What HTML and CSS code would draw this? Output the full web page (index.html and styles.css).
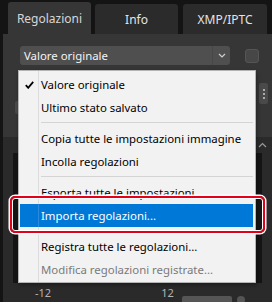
FILE: index.html
```html
<!DOCTYPE html>
<html lang="it">
  <head>
    <meta charset="UTF-8" />
    <title>Regolazioni</title>
    <link rel="stylesheet" href="styles.css">
  </head>
  <body>
    <div class="window">
      <div class="tabs">
        <div class="tab active">Regolazioni</div>
        <div class="tab">Info</div>
        <div class="tab">XMP/IPTC</div>
      </div>

      <div class="panel">
        <div class="preset-row">
          <div class="select">
            <span class="select-label">Valore originale</span>
            <span class="select-btn">
              <svg width="8" height="5" viewBox="0 0 8 5"><path d="M1 1 L4 4 L7 1" fill="none" stroke="#cfcfcf" stroke-width="1.2"/></svg>
            </span>
          </div>
          <div class="check"></div>
        </div>

        <div class="tool-row">
          <div class="handle"></div>
          <div class="side-btn">
            <span></span><span></span><span></span>
          </div>
        </div>

        <div class="section">
          <div class="section-head">
            <svg width="9" height="6" viewBox="0 0 9 6"><path d="M1 5 L4.5 1.5 L8 5" fill="none" stroke="#9a9a9a" stroke-width="1.2"/></svg>
          </div>
          <div class="section-body"></div>
          <div class="scale">
            <span class="tick-lo">-12</span>
            <span class="tick-hi">12</span>
            <span class="field"></span>
            <span class="knob"></span>
          </div>
        </div>
      </div>

      <!-- context menu over the panel -->
      <div class="menu">
        <div class="item checked">
          <svg class="tick" width="9" height="8" viewBox="0 0 9 8"><path d="M0.8 4.2 L3.2 6.8 L8.2 0.8" fill="none" stroke="#000" stroke-width="1.8"/></svg>
          Valore originale
        </div>
        <div class="item">Ultimo stato salvato</div>
        <div class="sep"></div>
        <div class="item">Copia tutte le impostazioni immagine</div>
        <div class="item">Incolla regolazioni</div>
        <div class="sep"></div>
        <div class="item">Esporta tutte le impostazioni...</div>
        <div class="item selected">Importa regolazioni...</div>
        <div class="sep"></div>
        <div class="item">Registra tutte le regolazioni...</div>
        <div class="item disabled">Modifica regolazioni registrate...</div>
      </div>

      <div class="callout"></div>
    </div>
  </body>
</html>
```

FILE: styles.css
```css
* {
  margin: 0;
  padding: 0;
  box-sizing: border-box;
}

body {
  background-color: #141414;
  font-family: "Noto Sans", "Open Sans", sans-serif;
  font-size: 11px;
}

.window {
  position: relative;
  width: 272px;
  height: 302px;
  overflow: hidden;
  display: flex;
  flex-direction: column;
}

/* Tabs */
.tabs {
  display: flex;
  align-items: flex-end;
  gap: 4px;
  height: 34px;
  padding-left: 8px;
}

.tab {
  width: 83px;
  height: 30px;
  background-color: #2b2b2b;
  border-radius: 3px 3px 0 0;
  color: #e4e4e4;
  font-size: 12px;
  display: flex;
  align-items: center;
  justify-content: center;
}

.tab:last-child {
  width: 84px;
  margin-left: 1px;
}

.tab.active {
  height: 32px;
  background-color: #363636;
  color: #d6d6d6;
}

/* Panel */
.panel {
  flex: 1;
  margin-left: 3px;
  background-color: #363636;
  display: flex;
  flex-direction: column;
}

.preset-row {
  display: flex;
  align-items: center;
  padding: 12px 0 0 17px;
  height: 31px;
}

.select {
  width: 210px;
  height: 19px;
  background-color: #4f4f4f;
  border-radius: 3px;
  display: flex;
  align-items: center;
}

.select-label {
  flex: 1;
  padding-left: 4px;
  color: #f4f4f4;
  font-size: 11.4px;
}

.select-btn {
  width: 18px;
  height: 19px;
  display: flex;
  align-items: center;
  justify-content: center;
  border-left: 1px solid #474747;
}

.check {
  width: 14px;
  height: 14px;
  margin-left: 15px;
  background-color: #474747;
  border: 1px solid #555;
  border-radius: 3px;
}

.tool-row {
  height: 72px;
  position: relative;
  display: flex;
  justify-content: space-between;
  padding-top: 18px;
}

.handle {
  width: 5px;
  height: 13px;
  margin-top: 18px;
  margin-left: 12px;
  background-color: #4a4a4a;
  border-radius: 2px;
}

.side-btn {
  width: 9px;
  height: 21px;
  margin-right: 4px;
  background-color: #4a4a4a;
  border-radius: 2px;
  display: flex;
  flex-direction: column;
  align-items: center;
  justify-content: center;
  gap: 2px;
}

.side-btn span {
  width: 2px;
  height: 2px;
  background-color: #aaa;
}

.section {
  flex: 1;
  background-color: #2a2a2a;
  display: flex;
  flex-direction: column;
}

.section-head {
  height: 16px;
  display: flex;
  justify-content: flex-end;
  align-items: center;
  padding-right: 5px;
}

.section-body {
  flex: 1;
  margin: 0 10px 0 10px;
  background-color: #151515;
}

.scale {
  height: 19px;
  display: flex;
  align-items: center;
  color: #b4b4b4;
  font-size: 11px;
  position: relative;
}

.tick-lo {
  margin-left: 32px;
}

.tick-hi {
  margin-left: 110px;
}

.field {
  width: 50px;
  height: 8px;
  margin-left: 8px;
  margin-top: 14px;
  background-color: #555;
  border-radius: 2px 2px 0 0;
}

.knob {
  width: 8px;
  height: 8px;
  margin-left: 5px;
  margin-top: 14px;
  background-color: #555;
  border-radius: 50%;
}

/* Context menu */
.menu {
  position: absolute;
  left: 18px;
  top: 70px;
  width: 238px;
  height: 213px;
  padding: 2px 2px 2px 2px;
  background-color: #f2f2f2;
  background-image: linear-gradient(to right, transparent 19px, #dcdcdc 19px, #dcdcdc 20px, transparent 20px);
  border: 1px solid #b4b4b4;
  box-shadow: 1px 2px 4px rgba(0, 0, 0, 0.35);
}

.item {
  position: relative;
  height: 23px;
  line-height: 23px;
  padding-left: 20px;
  color: #000;
  font-size: 11.4px;
  white-space: nowrap;
}

.item .tick {
  position: absolute;
  left: 4px;
  top: 8px;
}

.item.selected {
  margin-left: -1px;
  padding-left: 21px;
  background-color: #0078d7;
  background-image: linear-gradient(to right, transparent 18px, #2a8ae0 18px, #2a8ae0 19px, transparent 19px);
  color: #fff;
}

.item.disabled {
  color: #7a7a7a;
}

.sep {
  height: 8px;
  margin-left: 20px;
  background-image: linear-gradient(#d4d4d4, #d4d4d4);
  background-size: 100% 1px;
  background-position: 0 3px;
  background-repeat: no-repeat;
}

/* Red annotation frame */
.callout {
  position: absolute;
  left: 10px;
  top: 196px;
  width: 255px;
  height: 37px;
  border: 2px solid #e2001a;
  border-radius: 5px;
  box-shadow: 0 0 0 1.5px #fff, inset 0 0 0 1px #fff;
}
```
